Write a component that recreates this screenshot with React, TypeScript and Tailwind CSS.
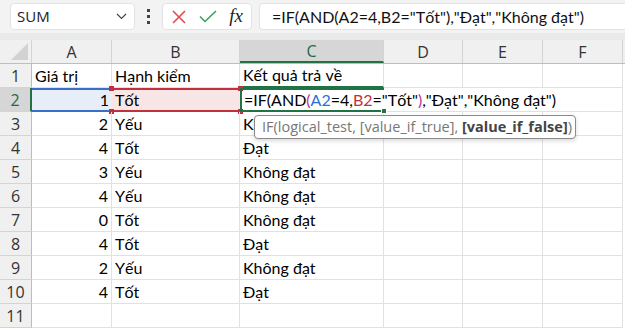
import React from 'react';

const cellFont = "font-['Lato','Noto_Sans',sans-serif] [font-kerning:none]";

const widths = [80, 128, 144, 79, 80, 80];
const cols = ['A', 'B', 'C', 'D', 'E', 'F'];

const rows: [string, string, string][] = [
  ['Giá trị', 'Hạnh kiểm', 'Kết quả trả về'],
  ['1', 'Tốt', ''],
  ['2', 'Yếu', 'Không đạt'],
  ['4', 'Tốt', 'Đạt'],
  ['3', 'Yếu', 'Không đạt'],
  ['4', 'Yếu', 'Không đạt'],
  ['0', 'Tốt', 'Không đạt'],
  ['4', 'Tốt', 'Đạt'],
  ['2', 'Yếu', 'Không đạt'],
  ['4', 'Tốt', 'Đạt'],
  ['', '', ''],
];

const Formula = () => (
  <span>
    =IF(AND<span className="text-[#b9339b]">(</span>
    <span className="text-[#2e6fd6]">A2</span>=4,
    <span className="text-[#c2303d]">B2</span>="Tốt"
    <span className="text-[#b9339b]">)</span>,"Đạt","Không đạt")
  </span>
);

const Handle = ({ pos, color }: { pos: string; color: string }) => (
  <div className={`absolute w-[5px] h-[5px] ${pos} ${color}`} />
);

export default function App() {
  return (
    <div className="w-[625px] h-[328px] overflow-hidden bg-white relative select-none">
      {/* toolbar */}
      <div className="h-[33px] bg-[#f3f3f3] flex items-center pl-[10px] gap-0">
        <div className="w-[125px] h-[27px] bg-white rounded-[4px] border border-[#e3e3e3] flex items-center justify-between pl-[6px] pr-[7px]">
          <span className="text-[15px] text-[#222] font-['Open_Sans',sans-serif]">SUM</span>
          <svg width="11" height="7" viewBox="0 0 11 7">
            <path d="M1 1 L5.5 5.5 L10 1" fill="none" stroke="#444" strokeWidth="1.2" />
          </svg>
        </div>
        <div className="w-[27px] flex flex-col items-center gap-[3px]">
          <div className="w-[3px] h-[3px] bg-[#444]" />
          <div className="w-[3px] h-[3px] bg-[#444]" />
          <div className="w-[3px] h-[3px] bg-[#444]" />
        </div>
        <div className="w-[90px] h-[27px] bg-white rounded-[4px] border border-[#e3e3e3] flex items-center justify-between pl-[9px] pr-[8px]">
          <svg width="14" height="14" viewBox="0 0 14 14">
            <path d="M1 1 L13 13 M13 1 L1 13" stroke="#e5484d" strokeWidth="1.6" />
          </svg>
          <svg width="18" height="13" viewBox="0 0 18 13">
            <path d="M1 6.5 L6 11.5 L17 1" fill="none" stroke="#3aa05a" strokeWidth="1.6" />
          </svg>
          <span className="text-[19px] italic text-[#222] font-['Liberation_Serif',serif] leading-none -mt-[2px]">fx</span>
        </div>
        <div className="ml-[7px] flex-1 h-[27px] bg-white rounded-l-[4px] border border-r-0 border-[#e3e3e3] flex items-center pl-[12px]">
          <span className={`text-[16px] text-[#111] whitespace-nowrap ${cellFont}`}>
            =IF(AND(A2=4,B2="Tốt"),"Đạt","Không đạt")
          </span>
        </div>
      </div>
      <div className="h-[7px] bg-[#e9ebeb]" />

      {/* column headers */}
      <div className="flex h-[24px] bg-[#f0f0f0] border-b border-[#bdbdbd]">
        <div className="w-[32px] border-r border-[#d4d4d4] relative">
          <svg className="absolute right-[3px] bottom-[3px]" width="17" height="17" viewBox="0 0 17 17">
            <path d="M17 0 L17 17 L0 17 Z" fill="#d2d2d2" />
          </svg>
        </div>
        {cols.map((c, i) => (
          <div
            key={c}
            style={{ width: widths[i] }}
            className={`flex items-center justify-center text-[16px] font-['Open_Sans',sans-serif] border-r border-[#d4d4d4] ${
              c === 'C' ? 'bg-[#d6d6d6] text-[#1e6b41] border-b-2 border-b-[#217346]' : 'text-[#333]'
            }`}
          >
            {c}
          </div>
        ))}
      </div>

      {/* rows */}
      {rows.map((r, ri) => {
        const rowNum = ri + 1;
        const active = rowNum === 2;
        return (
          <div key={ri} className="flex h-[24px]">
            <div
              className={`w-[32px] flex items-center justify-center text-[16px] font-['Open_Sans',sans-serif] border-b border-[#d4d4d4] ${
                active
                  ? 'bg-[#d6d6d6] text-[#1e6b41] border-r-2 border-r-[#217346]'
                  : 'bg-[#f0f0f0] text-[#333] border-r border-r-[#bdbdbd]'
              }`}
            >
              {rowNum}
            </div>
            {/* A */}
            <div
              style={{ width: widths[0] }}
              className={`relative flex items-center text-[16px] text-black ${cellFont} ${
                active
                  ? 'bg-[#e8eef8] border-y-2 border-[#3a6fc9] justify-end pr-[3px]'
                  : 'border-r border-b border-[#e1e1e1] ' + (ri === 0 ? 'justify-start pl-[3px]' : 'justify-end pr-[3px]')
              }`}
            >
              {r[0]}
            </div>
            {/* B */}
            <div
              style={{ width: widths[1] }}
              className={`relative flex items-center pl-[3px] text-[16px] text-black ${cellFont} ${
                active ? 'bg-[#f8e6e7] border-y-2 border-[#c2303d]' : 'border-r border-b border-[#e1e1e1]'
              }`}
            >
              {r[1]}
              {active && (
                <>
                  <Handle pos="-left-[3px] -top-[4px]" color="bg-[#c2303d]" />
                  <Handle pos="-right-[3px] -top-[4px]" color="bg-[#c2303d]" />
                  <Handle pos="-left-[3px] -bottom-[4px]" color="bg-[#c2303d]" />
                  <Handle pos="-right-[3px] -bottom-[4px]" color="bg-[#c2303d]" />
                </>
              )}
            </div>
            {/* C */}
            <div
              style={{ width: widths[2] }}
              className={`relative flex items-center text-[16px] text-black whitespace-nowrap ${cellFont} ${
                active
                  ? 'z-10 border-y-2 border-l-2 border-[#217346] pl-[2px] overflow-visible'
                  : rowNum === 1
                  ? 'border-r border-[#e1e1e1] border-b-2 border-b-[#217346] pl-[3px]'
                  : 'border-r border-b border-[#e1e1e1] pl-[3px]'
              }`}
            >
              {active ? <Formula /> : r[2]}
              {active && <div className="absolute -right-[3px] -bottom-[4px] w-[6px] h-[6px] bg-[#217346] border border-white" />}
            </div>
            {/* D E F */}
            {[3, 4, 5].map((ci) => (
              <div
                key={ci}
                style={{ width: widths[ci] }}
                className={`border-b border-[#e1e1e1] ${active && ci < 5 ? '' : 'border-r'}`}
              />
            ))}
          </div>
        );
      })}

      {/* tooltip */}
      <div className="absolute left-[254px] top-[115px] w-[322px] h-[24px] bg-white border border-[#8a8a8a] rounded-[4px] shadow-[0_2px_4px_rgba(0,0,0,0.15)] flex items-center pl-[7px] z-20">
        <span className="text-[14.5px] text-[#777] whitespace-nowrap font-['Open_Sans',sans-serif]">
          IF(logical_test, [value_if_true], <span className="font-bold text-[#444]">[value_if_false]</span>)
        </span>
      </div>
    </div>
  );
}
